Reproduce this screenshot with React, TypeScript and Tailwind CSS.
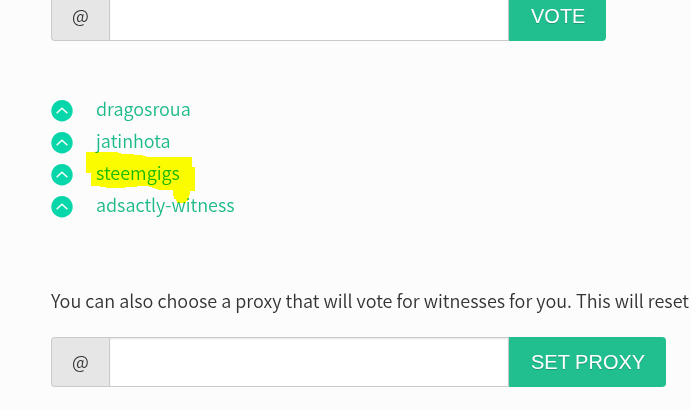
import { useState } from 'react'

const WITNESSES = [
  { name: 'dragosroua', marked: false },
  { name: 'jatinhota', marked: false },
  { name: 'steemgigs', marked: true },
  { name: 'adsactly-witness', marked: false },
]

export default function App() {
  const [witness, setWitness] = useState('')
  const [proxy, setProxy] = useState('')

  return (
    <main className="min-h-screen overflow-hidden bg-[#fcfcfc] pl-[51px] font-['Noto_Sans_CJK_SC','Open_Sans',sans-serif] text-lg font-[350] text-[#333333]">
      <div className="-mt-[9px]">
        <AccountForm id="witness" label="Witness account" action="VOTE" value={witness} onChange={setWitness} />
      </div>

      <ul className="mt-[51px]">
        {WITNESSES.map((item) => (
          <li key={item.name} className="flex h-8 items-center gap-[23px]">
            <button type="button" aria-label={`Vote for ${item.name}`} className="mt-1.5 shrink-0">
              <ChevronUpCircle />
            </button>
            <a href={`#${item.name}`} className="relative text-[#1cba8a]">
              {item.name}
              {item.marked && <Marker />}
            </a>
          </li>
        ))}
      </ul>

      <p className="mt-16 mb-[21px] whitespace-nowrap leading-8">
        You can also choose a proxy that will vote for witnesses for you. This will reset
      </p>

      <AccountForm id="proxy" label="Proxy account" action="SET PROXY" value={proxy} onChange={setProxy} />
    </main>
  )
}

function AccountForm({
  id,
  label,
  action,
  value,
  onChange,
}: {
  id: string
  label: string
  action: string
  value: string
  onChange: (value: string) => void
}) {
  return (
    <form className="flex h-[50px]" onSubmit={(event) => event.preventDefault()}>
      <label
        htmlFor={id}
        aria-label={label}
        className="flex w-[58px] shrink-0 items-center justify-center rounded-l border border-r-0 border-[#cacaca] bg-[#e6e6e6] pb-0.5"
      >
        @
      </label>
      <input
        id={id}
        type="text"
        value={value}
        onChange={(event) => onChange(event.target.value)}
        className="min-w-0 max-w-[400px] flex-1 border border-[#cacaca] bg-white px-2 shadow-[inset_0_1px_2px_rgba(10,10,10,0.1)] outline-none"
      />
      <button
        type="submit"
        className="shrink-0 rounded-r bg-[#21bf8f] pl-[22px] pr-[21px] font-['Liberation_Sans',Arial,sans-serif] text-xl font-normal text-white [text-shadow:0_1px_0_rgba(0,0,0,0.2)]"
      >
        {action}
      </button>
    </form>
  )
}

function ChevronUpCircle() {
  return (
    <svg width="22" height="22" viewBox="0 0 22 22" fill="none" aria-hidden="true">
      <circle cx="11" cy="10.7" r="10.7" fill="#06d6a9" />
      <path d="M5.6 13.3 L11 8.2 L16.4 13.3" stroke="#ffffff" strokeWidth="1.4" />
    </svg>
  )
}

// Highlighter stroke laid over the name, multiplied so the text stays readable
function Marker() {
  return (
    <svg
      width="110"
      height="54"
      viewBox="86 151 110 54"
      className="pointer-events-none absolute -left-[10px] -top-[7px] z-10 max-w-none mix-blend-multiply"
      aria-hidden="true"
    >
      <path
        d="M86 152 H118 V153 H121 V154 H134 V155 H143 V156 H146 V157 H192 V167 H195 V191 H190 V195 H189 V198 H188 V201 H186 V203 H177 V201 H176 V199 H174 V196 H173 V190 H158 V189 H155 V188 H152 V187 H149 V186 H137 V187 H125 V188 H106 V187 H100 V186 H91 V173 H86 Z"
        fill="#ffff00"
      />
    </svg>
  )
}
